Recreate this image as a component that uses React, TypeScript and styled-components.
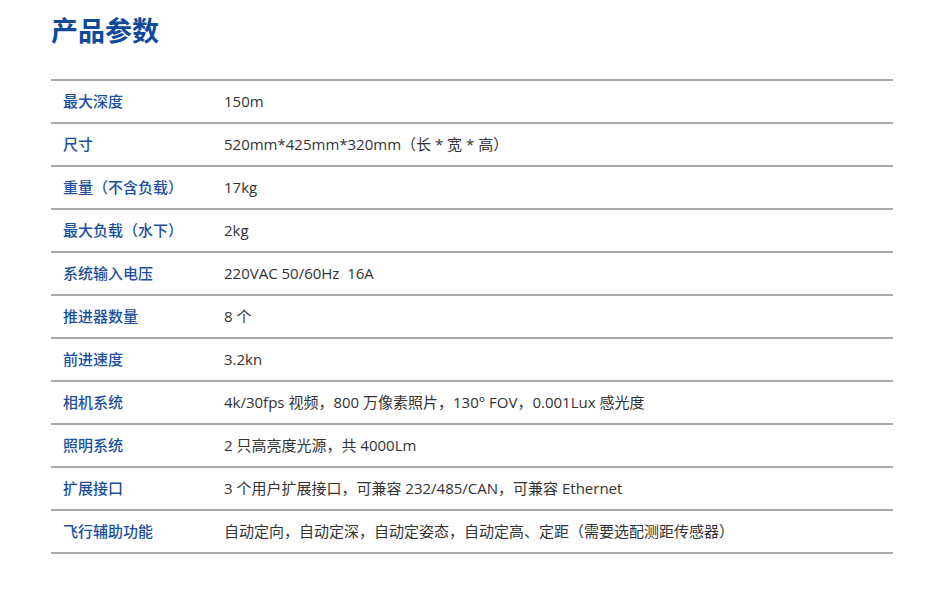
import * as React from 'react';
import styled, { createGlobalStyle } from 'styled-components';

interface Spec {
	label: string;
	value: string;
}

const specs: Spec[] = [
	{ label: '最大深度', value: '150m' },
	{ label: '尺寸', value: '520mm*425mm*320mm（长 * 宽 * 高）' },
	{ label: '重量（不含负载）', value: '17kg' },
	{ label: '最大负载（水下）', value: '2kg' },
	{ label: '系统输入电压', value: '220VAC 50/60Hz\u00a0\u00a016A' },
	{ label: '推进器数量', value: '8 个' },
	{ label: '前进速度', value: '3.2kn' },
	{ label: '相机系统', value: '4k/30fps 视频，800 万像素照片，130° FOV，0.001Lux 感光度' },
	{ label: '照明系统', value: '2 只高亮度光源，共 4000Lm' },
	{ label: '扩展接口', value: '3 个用户扩展接口，可兼容 232/485/CAN，可兼容 Ethernet' },
	{ label: '飞行辅助功能', value: '自动定向，自动定深，自动定姿态，自动定高、定距（需要选配测距传感器）' },
];

const GlobalStyle = createGlobalStyle`
	body {
		margin: 0;
		background: #ffffff;
		font-family: 'Open Sans', 'Noto Sans CJK SC', sans-serif;
	}
`;

const Page = styled.div`
	width: 842px;
	padding: 14px 0 0 51px;
`;

const Title = styled.h2`
	margin: 0 0 33px;
	font-family: 'Noto Sans CJK SC', sans-serif;
	font-size: 27px;
	line-height: 32px;
	font-weight: 700;
	color: #0d4a9a;
`;

const Table = styled.div`
	border-top: 2px solid #a9a9a9;
`;

const Row = styled.div`
	display: grid;
	grid-template-columns: 173px 1fr;
	height: 41px;
	padding-bottom: 1px;
	box-sizing: border-box;
	align-items: center;
	border-bottom: 2px solid #a9a9a9;
	font-size: 15px;
	line-height: 20px;
	height: 43px;
`;

const Label = styled.span`
	padding-left: 12px;
	font-family: 'Noto Sans CJK SC', sans-serif;
	font-weight: 500;
	color: #1c4f9e;
`;

const Value = styled.span`
	font-family: 'Open Sans', 'Noto Sans CJK SC', sans-serif;
	color: #333333;
`;

export default function App() {
	return (
		<Page>
			<GlobalStyle />
			<Title>产品参数</Title>
			<Table>
				{specs.map(spec => (
					<Row key={spec.label}>
						<Label>{spec.label}</Label>
						<Value>{spec.value}</Value>
					</Row>
				))}
			</Table>
		</Page>
	);
}
